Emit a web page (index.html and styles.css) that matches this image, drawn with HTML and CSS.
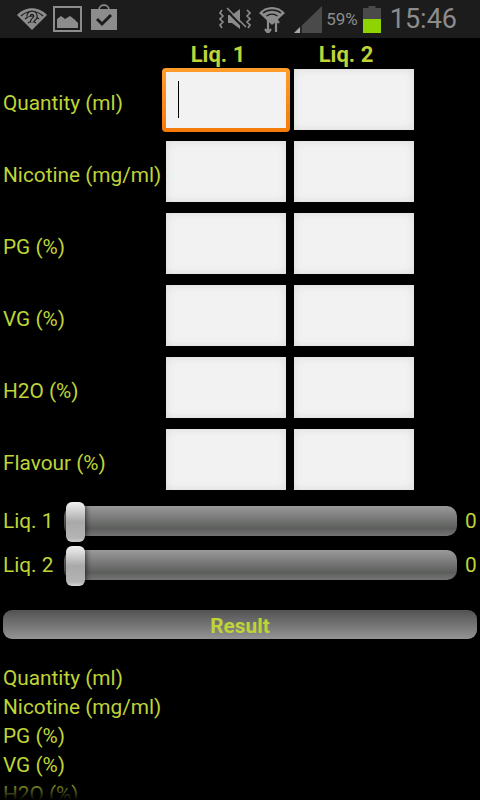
FILE: index.html
```html
<!DOCTYPE html>
<html lang="en">
<head>
<meta charset="utf-8">
<title>Liquid mixer</title>
<link rel="stylesheet" href="styles.css">
</head>
<body>
<div class="screen">
  <header class="status">
    <div class="status-left">
      <svg class="ic ic-help" width="30" height="22" viewBox="0 0 30 22"><path d="M0 7 C8 -2 22 -2 30 7 L15 22 Z" fill="#8c8c8c"/><path d="M4 8 C10 2 20 2 26 8 M8 11 C12 7 18 7 22 11 M11 15 C13 13 17 13 19 15" stroke="#1c1c1c" stroke-width="1.2" fill="none"/><path d="M10 6 H20 V17 H10 Z" fill="#1c1c1c" opacity="0"/><path d="M11.500 8.500 C11.500 3.500 18.500 3.500 18.500 8.500 C18.500 11 15 11 15 14.500" stroke="#1c1c1c" stroke-width="4.500" fill="none"/><path d="M11.500 8.500 C11.500 3.500 18.500 3.500 18.500 8.500 C18.500 11 15 11 15 14.500" stroke="#8c8c8c" stroke-width="2.200" fill="none"/><rect x="13.500" y="16" width="3" height="3" fill="#8c8c8c"/></svg>
      <svg class="ic ic-pic" width="29" height="26" viewBox="0 0 29 26"><rect x="1" y="1" width="27" height="24" fill="none" stroke="#8c8c8c" stroke-width="2"/><path d="M4 22 V13 L8 10 L12 13 L17 10 L21 13 L25 17 V22 Z" fill="#8c8c8c"/></svg>
      <svg class="ic ic-bag" width="26" height="26" viewBox="0 0 26 26"><path d="M8 6 C8 -0.500 18 -0.500 18 6" fill="none" stroke="#8c8c8c" stroke-width="1.600"/><rect x="0" y="5" width="26" height="21" fill="#8c8c8c"/><path d="M6 15 L11 20 L20 11" fill="none" stroke="#1c1c1c" stroke-width="3"/></svg>
    </div>
    <div class="status-right">
      <svg class="ic" width="32" height="24" viewBox="0 0 32 24"><path d="M9 8 H13 L21 2 V22 L13 16 H9 Z" fill="#8c8c8c"/><path d="M3 3 L1 6 L4 9 L1 12 L4 15 L1 18 L3 21 M28 3 L31 6 L28 9 L31 12 L28 15 L31 18 L29 21" fill="none" stroke="#8c8c8c" stroke-width="1.600"/><path d="M7 3 L26 22" stroke="#1c1c1c" stroke-width="2"/><path d="M8 1 L27 20" stroke="#8c8c8c" stroke-width="1.600"/></svg>
      <svg class="ic wifi" width="26" height="28" viewBox="0 0 26 28"><path d="M0 8 C7 0 19 0 26 8 L13 20 Z" fill="#8c8c8c"/><path d="M4 8 C9 4 17 4 22 8 M7.500 11 C10.500 8.500 15.500 8.500 18.500 11" stroke="#1c1c1c" stroke-width="1.400" fill="none"/><path d="M9 15 V27 M6 24 L9 28 L12 24 M17 27 V15 M14 18 L17 14 L20 18" stroke="#8c8c8c" stroke-width="2.200" fill="none"/></svg>
      <svg class="ic signal" width="28" height="27" viewBox="0 0 28 27"><path d="M28 0 V27 H0 Z" fill="#4a4a4a"/><path d="M6 21 V27 H0 Z" fill="#a8a8a8"/><path d="M7 20 V27" stroke="#1c1c1c" stroke-width="1.500"/></svg>
      <span class="pct">59%</span>
      <svg class="ic batt" width="18" height="27" viewBox="0 0 18 27"><rect x="5.500" y="0" width="7" height="3" fill="#4a4a4a"/><rect x="0" y="2" width="18" height="11" fill="#4a4a4a"/><rect x="0" y="13" width="18" height="14" fill="#8fd400"/></svg>
      <span class="clock">15:46</span>
    </div>
  </header>

  <main class="content">
    <div class="columns">
      <span class="col-title">Liq. 1</span>
      <span class="col-title">Liq. 2</span>
    </div>

    <div class="form">
      <div class="row"><span class="label">Quantity (ml)</span><div class="field focused"><i class="caret"></i></div><div class="field"></div></div>
      <div class="row"><span class="label">Nicotine (mg/ml)</span><div class="field"></div><div class="field"></div></div>
      <div class="row"><span class="label">PG (%)</span><div class="field"></div><div class="field"></div></div>
      <div class="row"><span class="label">VG (%)</span><div class="field"></div><div class="field"></div></div>
      <div class="row"><span class="label">H2O (%)</span><div class="field"></div><div class="field"></div></div>
      <div class="row"><span class="label">Flavour (%)</span><div class="field"></div><div class="field"></div></div>
    </div>

    <div class="sliders">
      <div class="slider-row"><span class="slider-label">Liq. 1</span><div class="track"><span class="thumb"></span></div><span class="slider-value">0</span></div>
      <div class="slider-row"><span class="slider-label">Liq. 2</span><div class="track"><span class="thumb"></span></div><span class="slider-value">0</span></div>
    </div>

    <div class="result-btn">Result</div>

    <ul class="results">
      <li>Quantity (ml)</li>
      <li>Nicotine (mg/ml)</li>
      <li>PG (%)</li>
      <li>VG (%)</li>
      <li>H2O (%)</li>
    </ul>
  </main>
  <div class="fade"></div>
</div>
</body>
</html>
```

FILE: styles.css
```css
* { box-sizing: border-box; }
html, body { margin: 0; padding: 0; background: #000; }
body { font-family: Roboto, "Liberation Sans", sans-serif; color: #bfd436; }
.screen { position: relative; width: 480px; height: 800px; overflow: hidden; background: #000; }

.status { height: 38px; background: #1c1c1c; display: flex; justify-content: space-between; align-items: center; color: #8c8c8c; }
.status-left { display: flex; align-items: flex-start; height: 38px; padding-left: 17px; }
.status-right { display: flex; align-items: center; padding-right: 23px; }
.ic { display: block; flex: none; }
.ic-help { margin-top: 8px; }
.ic-pic { margin-top: 6px; margin-left: 6px; }
.ic-bag { margin-top: 4px; margin-left: 9px; }
.wifi { margin-left: 8px; }
.signal { margin-left: 9px; }
.pct { font-size: 17px; margin-left: 4px; }
.batt { margin-left: 5px; }
.clock { font-size: 27px; margin-left: 9px; }

.columns { height: 31px; padding-left: 158px; display: flex; gap: 8px; align-items: center; }
.col-title { width: 120px; text-align: center; font-size: 22px; font-weight: 700; color: #bfd436; margin-top: 1px; }

.form { display: flex; flex-direction: column; gap: 11px; }
.row { display: flex; height: 61px; align-items: center; gap: 8px; padding-left: 3px; }
.label { width: 155px; padding-top: 6px; font-size: 20.8px; white-space: nowrap; }
.field { position: relative; width: 120px; height: 61px; background: #f2f2f2; box-shadow: inset 0 0 8px #d8d8d8; }
.focused { align-self: flex-start; width: 128px; height: 64px; margin: -1px -4px 0; border: 4px solid transparent; border-radius: 4px; background: linear-gradient(#f2f2f2, #f2f2f2) padding-box, linear-gradient(#ff9e2b, #f57a0a) border-box; box-shadow: none; }
.caret { position: absolute; left: 12px; top: 9px; width: 1px; height: 37px; background: #000; }

.sliders { margin-top: 16px; display: flex; flex-direction: column; gap: 14px; }
.slider-row { display: flex; align-items: center; height: 30px; padding-left: 3px; }
.slider-label { width: 61px; font-size: 20.8px; white-space: nowrap; }
.track { position: relative; width: 393px; height: 30px; border-radius: 10px; background: linear-gradient(#9a9a9a, #5c5e5c 75%, #747474); }
.thumb { position: absolute; left: 2px; top: -4px; width: 19px; height: 40px; border-radius: 6px; background: linear-gradient(#f2f2f2, #a9a9a9 50%, #b4b4b4 90%, #d8d8d8); box-shadow: 0 0 6px rgba(0,0,0,0.85); }
.slider-value { margin-left: 8px; font-size: 20.8px; }

.result-btn { margin: 30px 3px 0; height: 29px; border-radius: 9px; background: linear-gradient(#525252, #949494); text-align: center; font-size: 20.8px; font-weight: 700; line-height: 32px; color: #bfd436; }

.results { list-style: none; margin: 25px 0 0; padding: 0 0 0 3px; font-size: 20.8px; }
.results li { height: 29px; line-height: 29px; white-space: nowrap; }

.fade { position: absolute; left: 0; right: 0; bottom: 0; height: 22px; background: linear-gradient(rgba(0,0,0,0), #000); }
```
